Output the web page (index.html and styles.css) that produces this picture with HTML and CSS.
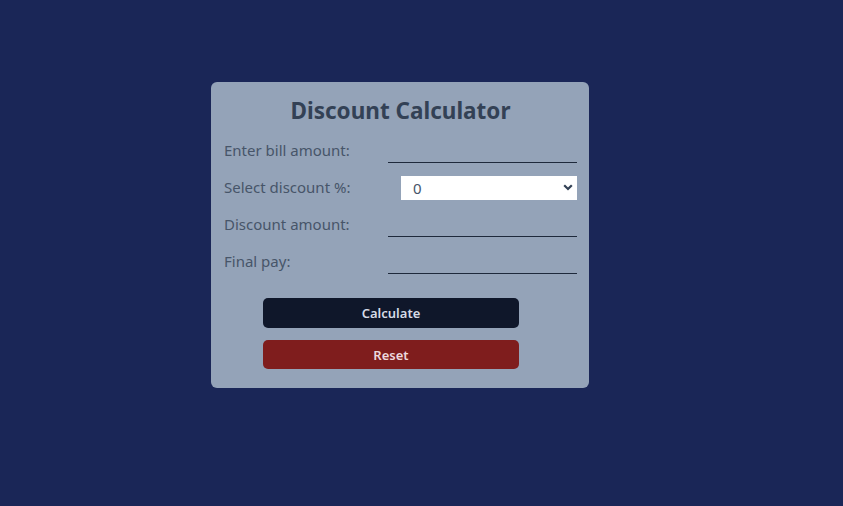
FILE: index.html
```html
<!DOCTYPE html>
<html lang="en">
<head>
<meta charset="utf-8">
<title>Discount Calculator</title>
<link rel="stylesheet" href="styles.css">
</head>
<body>
<main class="page">
  <form class="card">
    <h1 class="title">Discount Calculator</h1>
    <div class="row">
      <label class="label" for="bill">Enter bill amount:</label>
      <input class="line-input" id="bill" type="text">
    </div>
    <div class="row">
      <label class="label" for="pct">Select discount %:</label>
      <select class="select" id="pct">
        <option>0</option>
        <option>5</option>
        <option>10</option>
        <option>15</option>
        <option>20</option>
      </select>
    </div>
    <div class="row">
      <label class="label" for="disc">Discount amount:</label>
      <input class="line-input" id="disc" type="text" readonly>
    </div>
    <div class="row">
      <label class="label" for="final">Final pay:</label>
      <input class="line-input" id="final" type="text" readonly>
    </div>
    <div class="actions">
      <button type="button" class="btn btn-dark">Calculate</button>
      <button type="reset" class="btn btn-red">Reset</button>
    </div>
  </form>
</main>
</body>
</html>
```

FILE: styles.css
```css
* {
  box-sizing: border-box;
}

html,
body {
  margin: 0;
  height: 100%;
}

body {
  background: #1a2657;
  font-family: "Noto Sans", "Open Sans", sans-serif;
}

.page {
  display: flex;
  justify-content: center;
  padding-top: 82px;
}

.card {
  width: 378px;
  margin-right: 43px;
  background: #94a3b8;
  border-radius: 6px;
  padding: 12px 12px 19px 13px;
  display: flex;
  flex-direction: column;
  gap: 12px;
}

.title {
  margin: 0;
  height: 32px;
  line-height: 33px;
  text-align: center;
  font-size: 22.5px;
  font-weight: 700;
  color: #334155;
}

.row {
  display: flex;
  justify-content: space-between;
  align-items: center;
  height: 25px;
}

.label {
  font-size: 15px;
  color: #475569;
  line-height: 23px;
}

.line-input {
  width: 189px;
  height: 25px;
  border: 0;
  border-bottom: 1px solid #1e293b;
  background: transparent;
  outline: none;
  font: inherit;
  color: #334155;
}

.select {
  appearance: none;
  -webkit-appearance: none;
  width: 176px;
  height: 24px;
  border: 0;
  border-radius: 0;
  background: #fff url("data:image/svg+xml,%3Csvg xmlns='http://www.w3.org/2000/svg' width='10' height='7' viewBox='0 0 10 7'%3E%3Cpath d='M1.2 1.2 5 5 8.8 1.2' fill='none' stroke='%23334155' stroke-width='2.2'/%3E%3C/svg%3E") no-repeat right 4px center;
  padding: 0 0 0 12px;
  font-family: inherit;
  font-size: 15px;
  color: #475569;
  outline: none;
}

.actions {
  margin-top: 12px;
  padding-left: 39px;
  display: flex;
  flex-direction: column;
  align-items: flex-start;
  gap: 12px;
}

.btn {
  width: 256px;
  height: 29px;
  border: 0;
  border-radius: 5px;
  font-family: inherit;
  font-size: 13px;
  font-weight: 600;
  color: #d5dbe6;
  cursor: pointer;
}

.btn-dark {
  background: #0f172a;
  height: 30px;
}

.btn-red {
  background: #7f1d1d;
  color: #ecd9de;
}
```
